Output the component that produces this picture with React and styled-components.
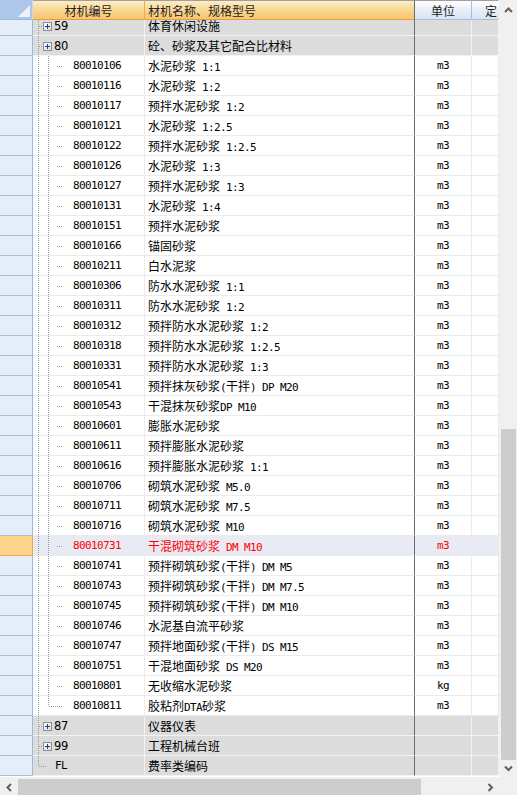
import React from "react";
import styled, { createGlobalStyle } from "styled-components";

const GlobalStyle = createGlobalStyle`
  html, body { margin: 0; padding: 0; background: #fff; }
  body { font-family: "Noto Sans CJK SC", sans-serif; font-size: 12px; color: #000; }
`;

const COLS = "33px 112px 270px 57px 27px";

const materials = [
  ["80010106", "水泥砂浆 1:1", "m3"],
  ["80010116", "水泥砂浆 1:2", "m3"],
  ["80010117", "预拌水泥砂浆 1:2", "m3"],
  ["80010121", "水泥砂浆 1:2.5", "m3"],
  ["80010122", "预拌水泥砂浆 1:2.5", "m3"],
  ["80010126", "水泥砂浆 1:3", "m3"],
  ["80010127", "预拌水泥砂浆 1:3", "m3"],
  ["80010131", "水泥砂浆 1:4", "m3"],
  ["80010151", "预拌水泥砂浆", "m3"],
  ["80010166", "锚固砂浆", "m3"],
  ["80010211", "白水泥浆", "m3"],
  ["80010306", "防水水泥砂浆 1:1", "m3"],
  ["80010311", "防水水泥砂浆 1:2", "m3"],
  ["80010312", "预拌防水水泥砂浆 1:2", "m3"],
  ["80010318", "预拌防水水泥砂浆 1:2.5", "m3"],
  ["80010331", "预拌防水水泥砂浆 1:3", "m3"],
  ["80010541", "预拌抹灰砂浆(干拌) DP M20", "m3"],
  ["80010543", "干混抹灰砂浆DP M10", "m3"],
  ["80010601", "膨胀水泥砂浆", "m3"],
  ["80010611", "预拌膨胀水泥砂浆", "m3"],
  ["80010616", "预拌膨胀水泥砂浆 1:1", "m3"],
  ["80010706", "砌筑水泥砂浆 M5.0", "m3"],
  ["80010711", "砌筑水泥砂浆 M7.5", "m3"],
  ["80010716", "砌筑水泥砂浆 M10", "m3"],
  ["80010731", "干混砌筑砂浆 DM M10", "m3", true],
  ["80010741", "预拌砌筑砂浆(干拌) DM M5", "m3"],
  ["80010743", "预拌砌筑砂浆(干拌) DM M7.5", "m3"],
  ["80010745", "预拌砌筑砂浆(干拌) DM M10", "m3"],
  ["80010746", "水泥基自流平砂浆", "m3"],
  ["80010747", "预拌地面砂浆(干拌) DS M15", "m3"],
  ["80010751", "干混地面砂浆 DS M20", "m3"],
  ["80010801", "无收缩水泥砂浆", "kg"],
  ["80010811", "胶粘剂DTA砂浆", "m3"],
];

const Page = styled.div`
  width: 517px;
  height: 795px;
  display: grid;
  grid-template-columns: 499px 18px;
  grid-template-rows: 777px 18px;
  overflow: hidden;
  background: #fff;
`;

const Table = styled.div`
  display: flex;
  flex-direction: column;
  overflow: hidden;
`;

const HeaderRow = styled.div`
  display: grid;
  grid-template-columns: ${COLS};
  height: 20px;
  flex: none;
`;

const Corner = styled.div`
  position: relative;
  background: #adc7ea;
  border-right: 1px solid #c8d8ee;
  border-bottom: 1px solid #9fb9dc;
  box-sizing: border-box;
  &::after {
    content: "";
    position: absolute;
    right: 2px;
    bottom: 2px;
    border-style: solid;
    border-width: 0 0 12px 12px;
    border-color: transparent transparent #eef2f8 transparent;
  }
`;

const HeadCell = styled.div`
  box-sizing: border-box;
  display: flex;
  align-items: center;
  justify-content: ${(p) => p.$align || "center"};
  padding-left: ${(p) => p.$pad || 0}px;
  white-space: nowrap;
  overflow: hidden;
  color: #1e1e1e;
  border-top: 1px solid #a0a0a0;
  background: ${(p) =>
    p.$hot
      ? "linear-gradient(#fdedc6, #f8d38a 60%, #f5c572)"
      : "linear-gradient(#ffffff, #e9eff8 50%, #d9e4f2)"};
  border-bottom: 1px solid ${(p) => (p.$hot ? "#f39a34" : "#a3bfe0")};
  border-right: 1px solid ${(p) => p.$edge || (p.$hot ? "#f3a94c" : "#a3bfe0")};
`;

const Body = styled.div`
  flex: 1;
  overflow: hidden;
`;

const Rows = styled.div`
  margin-top: -4px;
`;

const Row = styled.div`
  display: grid;
  grid-template-columns: ${COLS};
  height: 20px;
  background: ${(p) => (p.$group ? "#dcdcdc" : p.$selected ? "#e8eaf4" : "#fff")};
  color: ${(p) => (p.$selected ? "#ff0000" : "#000")};
`;

const RowHead = styled.div`
  box-sizing: border-box;
  background: ${(p) => (p.$selected ? "#fed38c" : "#e5edf8")};
  border-right: 1px solid ${(p) => (p.$selected ? "#eea449" : "#9fb8da")};
  border-bottom: 1px solid ${(p) => (p.$selected ? "#eea449" : "#a9c0de")};
`;

const Cell = styled.div`
  box-sizing: border-box;
  display: flex;
  align-items: center;
  justify-content: ${(p) => p.$align || "flex-start"};
  padding-left: ${(p) => p.$pad || 0}px;
  white-space: nowrap;
  overflow: hidden;
  border-bottom: 1px solid ${(p) => (p.$group ? "#f2f2f2" : "#ebebeb")};
  border-right: 1px solid ${(p) => p.$edge || (p.$group ? "#f2f2f2" : "#ebebeb")};
`;

const Text = styled.span`
  white-space: pre;
`;

const Latin = styled.span`
  font-family: "DejaVu Sans Mono", monospace;
  font-size: 11px;
  letter-spacing: -0.62px;
`;

const GroupCode = styled.span`
  font-family: "DejaVu Sans", sans-serif;
  font-size: 11.5px;
  letter-spacing: -0.3px;
`;

const ScrollV = styled.div`
  background: #f0f0f0;
  display: flex;
  flex-direction: column;
  align-items: center;
`;

const ScrollH = styled.div`
  background: #f0f0f0;
  display: flex;
  align-items: stretch;
  padding-top: 2px;
  box-sizing: border-box;
`;

const Arrow = styled.div`
  width: ${(p) => p.$w || 18}px;
  height: ${(p) => p.$h || 18}px;
  display: flex;
  align-items: center;
  justify-content: center;
  flex: none;
`;

const Track = styled.div`
  flex: ${(p) => (p.$grow ? 1 : "none")};
  height: ${(p) => (p.$size ? `${p.$size}px` : "auto")};
`;

const ThumbV = styled.div`
  width: 15px;
  height: ${(p) => p.$size}px;
  margin-left: 2px;
  align-self: flex-start;
  background: #cdcdcd;
`;

const ThumbH = styled.div`
  width: ${(p) => p.$size}px;
  background: #cdcdcd;
`;

const CornerBox = styled.div`
  background: #f0f0f0;
`;

function mixed(text) {
  return text.split(/([\x20-\x7e]+)/).map((part, i) =>
    /^[\x20-\x7e]+$/.test(part) ? <Latin key={i}>{part}</Latin> : part
  );
}

const DOT = { stroke: "#9a9a9a", strokeWidth: 1, strokeDasharray: "1 1" };

function Tree({ kind }) {
  if (kind === "group") {
    return (
      <svg width="16" height="20" style={{ flex: "none" }}>
        <line x1="0.5" y1="0" x2="0.5" y2="20" {...DOT} />
        <line x1="1" y1="10.5" x2="5" y2="10.5" {...DOT} />
        <defs>
          <linearGradient id="pb" x1="0" y1="0" x2="1" y2="1">
            <stop offset="0" stopColor="#ffffff" />
            <stop offset="1" stopColor="#d8d8d8" />
          </linearGradient>
        </defs>
        <rect x="5.5" y="6.5" width="8" height="8" fill="url(#pb)" stroke="#8e8f8f" />
        <line x1="7" y1="10.5" x2="12" y2="10.5" stroke="#1f3f93" />
        <line x1="9.5" y1="8" x2="9.5" y2="13" stroke="#1f3f93" />
      </svg>
    );
  }
  if (kind === "leaf") {
    return (
      <svg width="17" height="20" style={{ flex: "none" }}>
        <line x1="0.5" y1="0" x2="0.5" y2="10" {...DOT} />
        <line x1="1" y1="10.5" x2="8" y2="10.5" {...DOT} />
      </svg>
    );
  }
  const last = kind === "last";
  return (
    <svg width="35" height="20" style={{ flex: "none" }}>
      <line x1="0.5" y1="0" x2="0.5" y2="20" {...DOT} />
      <line x1="10.5" y1="0" x2="10.5" y2={last ? 10 : 20} {...DOT} />
      <line x1={last ? 11 : 19} y1="10.5" x2="25" y2="10.5" {...DOT} />
    </svg>
  );
}

function GroupRow({ code, name, leaf }) {
  return (
    <Row $group>
      <RowHead />
      <Cell $group $pad={5}>
        <Tree kind={leaf ? "leaf" : "group"} />
        {leaf ? <Latin>{code}</Latin> : <GroupCode>{code}</GroupCode>}
      </Cell>
      <Cell $group $pad={3} $edge="#6b6b6b">
        <Text>{name}</Text>
      </Cell>
      <Cell $group />
      <Cell $group />
    </Row>
  );
}

function Chevron({ dir }) {
  const d = {
    up: "M1 5 L4.5 1.5 L8 5",
    down: "M1 1.5 L4.5 5 L8 1.5",
    left: "M5 1 L1.5 4.5 L5 8",
    right: "M1.5 1 L5 4.5 L1.5 8",
  }[dir];
  const vertical = dir === "up" || dir === "down";
  return (
    <svg width={vertical ? 9 : 7} height={vertical ? 7 : 9}>
      <path d={d} fill="none" stroke="#606060" strokeWidth="2" />
    </svg>
  );
}

export default function App() {
  return (
    <>
      <GlobalStyle />
      <Page>
        <Table>
          <HeaderRow>
            <Corner />
            <HeadCell $hot>材机编号</HeadCell>
            <HeadCell $hot $align="flex-start" $pad={3} $edge="#6b6b6b">
              材机名称、规格型号
            </HeadCell>
            <HeadCell>单位</HeadCell>
            <HeadCell $align="flex-start" $pad={13} $edge="transparent">
              定
            </HeadCell>
          </HeaderRow>
          <Body>
            <Rows>
              <GroupRow code="59" name="体育休闲设施" />
              <GroupRow code="80" name="砼、砂浆及其它配合比材料" />
              {materials.map(([code, name, unit, selected], i) => (
                <Row key={code} $selected={selected}>
                  <RowHead $selected={selected} />
                  <Cell $pad={5}>
                    <Tree kind={i === materials.length - 1 ? "last" : "child"} />
                    <Latin>{code}</Latin>
                  </Cell>
                  <Cell $pad={3} $edge="#6b6b6b">
                    <Text>{mixed(name)}</Text>
                  </Cell>
                  <Cell $align="center">
                    <Latin>{unit}</Latin>
                  </Cell>
                  <Cell />
                </Row>
              ))}
              <GroupRow code="87" name="仪器仪表" />
              <GroupRow code="99" name="工程机械台班" />
              <GroupRow code="FL" name="费率类编码" leaf />
            </Rows>
          </Body>
        </Table>
        <ScrollV>
          <Arrow $h={20}>
            <Chevron dir="up" />
          </Arrow>
          <Track $size={409} />
          <ThumbV $size={331} />
          <Arrow $h={17}>
            <Chevron dir="down" />
          </Arrow>
        </ScrollV>
        <ScrollH>
          <Arrow $w={18} $h={16}>
            <Chevron dir="left" />
          </Arrow>
          <ThumbH $size={403} />
          <Track $grow />
          <Arrow $w={18} $h={16}>
            <Chevron dir="right" />
          </Arrow>
        </ScrollH>
        <CornerBox />
      </Page>
    </>
  );
}
